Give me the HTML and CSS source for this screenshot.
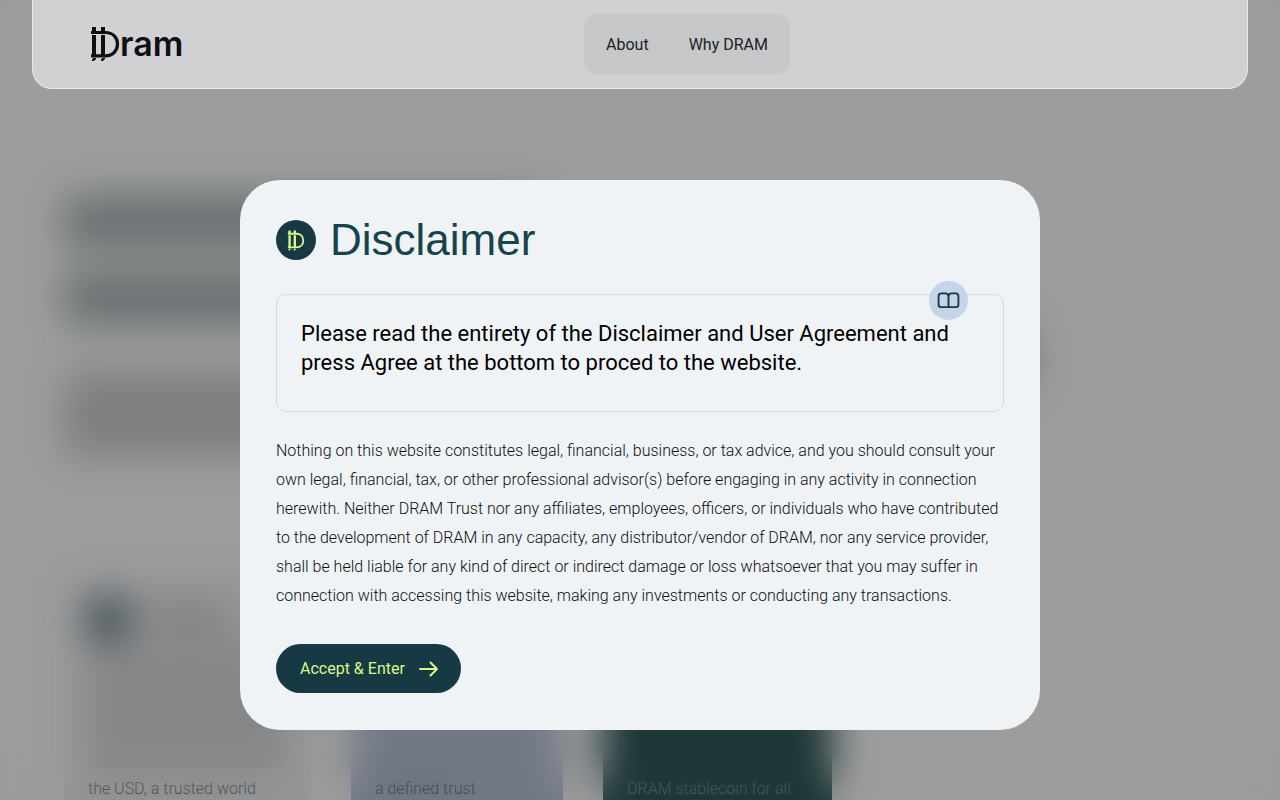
FILE: index.html
```html
<!DOCTYPE html>
<html lang="en">
<head>
  <meta charset="UTF-8" />
  <meta name="viewport" content="width=device-width, initial-scale=1.0" />
  <title>Dram</title>
  <link rel="stylesheet" href="styles.css">
</head>
<body>
  <svg class="sprite" aria-hidden="true">
    <symbol id="dram-mark" viewBox="0 0 30 36">
      <path d="M2 1h4v4H2zM11 1h4v4h-4zM3 32h3v1l-2 2H2v-1zM12 32h3v1l-2 2h-2v-1z" fill="currentColor" />
      <path d="M1 6.5h14.5C23 6.5 27.5 11.5 27.5 18S23 29.8 15.5 29.8H1" fill="none" stroke="currentColor" stroke-width="3.2" />
      <path d="M4 9v20M13 9v20" fill="none" stroke="currentColor" stroke-width="4" />
    </symbol>
  </svg>

  <header class="header">
    <a class="logo" href="#" aria-label="Dram">
      <svg><use href="#dram-mark" /></svg>
      <span>ram</span>
    </a>
    <nav class="nav">
      <a href="#about">About</a>
      <a href="#why">Why DRAM</a>
    </nav>
  </header>

  <main class="page">
    <section class="hero">
      <div class="hero-copy">
        <div class="hero-line"></div>
        <div class="hero-line"></div>
        <div class="hero-lead"></div>
      </div>
      <div class="hero-coin"></div>
    </section>
    <section class="cards">
      <article class="card">
        <div class="card-head"><i></i><b></b></div>
        <div class="card-fill"></div>
        <p>the USD, a trusted world</p>
      </article>
      <article class="card card-blue">
        <p>a defined trust</p>
      </article>
      <article class="card card-dark">
        <p>DRAM stablecoin for all</p>
      </article>
    </section>
  </main>

  <div class="tint"></div>
  <div class="blur"></div>

  <div class="overlay">
    <div class="modal" role="dialog" aria-modal="true" aria-labelledby="modal-title">
      <div class="modal-head">
        <span class="coin"><svg><use href="#dram-mark" /></svg></span>
        <h1 id="modal-title">Disclaimer</h1>
      </div>
      <div class="notice">
        <span class="badge">
          <svg viewBox="0 0 24 18" fill="none" stroke="currentColor" stroke-width="2" stroke-linejoin="round">
            <path d="M12 5C12 2.5 10.5 1.5 8.5 1.5H4.5C2.5 1.5 1.5 2.5 1.5 4.5v9c0 1.7.8 2.5 2.5 2.5h16c1.7 0 2.5-.8 2.5-2.5v-9c0-2-1-3-3-3h-4C13.5 1.5 12 2.5 12 5zM12 5V16" />
          </svg>
        </span>
        <p>Please read the entirety of the Disclaimer and User Agreement and<br>press Agree at the bottom to proced to the website.</p>
      </div>
      <p class="terms">Nothing on this website constitutes legal, financial, business, or tax advice, and you should consult your<br>
        own legal, financial, tax, or other professional advisor(s) before engaging in any activity in connection<br>
        herewith. Neither DRAM Trust nor any affiliates, employees, officers, or individuals who have contributed<br>
        to the development of DRAM in any capacity, any distributor/vendor of DRAM, nor any service provider,<br>
        shall be held liable for any kind of direct or indirect damage or loss whatsoever that you may suffer in<br>
        connection with accessing this website, making any investments or conducting any transactions.</p>
      <button class="accept" type="button">
        Accept &amp; Enter
        <svg viewBox="0 0 20 16" fill="none" stroke="currentColor" stroke-width="2" stroke-linecap="round" stroke-linejoin="round">
          <path d="M1 8h17M11.5 1.5L18 8l-6.5 6.5" />
        </svg>
      </button>
    </div>
  </div>
</body>
</html>
```

FILE: styles.css
```css
* {
  box-sizing: border-box;
}
body {
  margin: 0;
  height: 100vh;
  overflow: hidden;
  background: #fdfdfd;
  color: #0d0f12;
  font-family: Roboto, "Liberation Sans", sans-serif;
  font-size: 16px;
}
h1, p {
  margin: 0;
}
a {
  color: inherit;
  text-decoration: none;
}
.sprite {
  position: absolute;
  width: 0;
  height: 0;
}

/* header */
.header {
  position: relative;
  z-index: 20;
  display: grid;
  grid-template-columns: 1fr auto 1fr;
  align-items: center;
  height: 89px;
  margin: 0 32px;
  padding: 0 57px;
  background: #d0d1d3;
  border: 1px solid #e8e9eb;
  border-top: 0;
  border-radius: 0 0 20px 20px;
}
.logo {
  display: flex;
  align-items: center;
}
.logo svg {
  width: 30px;
  height: 36px;
}
.logo span {
  font-family: Inter, sans-serif;
  font-size: 34px;
  font-weight: 600;
  line-height: 36px;
}
.nav {
  display: flex;
  align-items: center;
  gap: 40px;
  height: 60px;
  padding: 0 22px;
  margin-left: 94px;
  background: #c6c7c9;
  border-radius: 14px;
  color: #1e2022;
}

/* page under the dialog */
.page {
  padding: 108px 64px 0;
}
.hero {
  display: flex;
  justify-content: space-between;
  height: 378px;
}
.hero-copy {
  width: 480px;
}
.hero-line {
  height: 50px;
  margin-bottom: 26px;
  background: #a3b1b2;
}
.hero-lead {
  height: 86px;
  margin-top: 48px;
  background: #cccccc;
}
.hero-coin {
  width: 100px;
  height: 100px;
  margin: 110px 180px 0 0;
  border-radius: 50%;
  background: #bcc6d6;
}
.cards {
  display: grid;
  grid-template-columns: 247px 212px 229px;
  gap: 40px;
}
.card {
  display: flex;
  flex-direction: column;
  justify-content: flex-end;
  height: 260px;
  padding: 24px 24px 32px;
  background: #eff1f4;
  color: #444a4d;
  font-weight: 300;
  line-height: 29px;
}
.card-head {
  display: flex;
  align-items: center;
  gap: 20px;
}
.card-head i {
  width: 40px;
  height: 40px;
  border-radius: 50%;
  background: #31505a;
}
.card-head b {
  width: 80px;
  height: 30px;
  background: #cccdd0;
}
.card-fill {
  flex: 1;
  margin: 6px 0;
  background: #d7d8da;
}
.card-blue {
  background: #b9c3d9;
}
.card-dark {
  background: #31575a;
  color: #9fb0b2;
}
.tint,
.blur {
  position: fixed;
  inset: 0;
}
.tint {
  background: rgba(0, 0, 0, 0.38);
}
.blur {
  backdrop-filter: blur(20px);
  mask-image: linear-gradient(#000 calc(100% - 50px), rgba(0, 0, 0, 0.5));
}

/* dialog */
.overlay {
  position: fixed;
  inset: 0;
  z-index: 10;
  display: flex;
  align-items: center;
  justify-content: center;
  padding-top: 110px;
}
.modal {
  width: 800px;
  max-width: 100%;
  padding: 36px 36px 37px;
  background: #eff3f6;
  border-radius: 40px;
}
.modal-head {
  display: flex;
  align-items: center;
  gap: 14px;
  height: 48px;
}
.modal-head h1 {
  color: #17434a;
  font-family: "Liberation Sans", sans-serif;
  font-size: 44px;
  font-weight: 400;
  line-height: 48px;
}
.coin {
  display: grid;
  place-items: center;
  width: 40px;
  height: 40px;
  border-radius: 50%;
  background: #173944;
  color: #d9f88a;
}
.coin svg {
  width: 18px;
  height: 21px;
}
.notice {
  position: relative;
  margin-top: 30px;
  padding: 24px 24px 34px;
  border: 1px solid #d5dadd;
  border-radius: 10px;
  color: #000;
  font-size: 22px;
  line-height: 29px;
  white-space: nowrap;
}
.badge {
  position: absolute;
  top: -14px;
  right: 35px;
  display: grid;
  place-items: center;
  width: 39px;
  height: 39px;
  border-radius: 50%;
  background: #c4d5e8;
  color: #173944;
}
.badge svg {
  width: 23px;
  height: 17px;
}
.terms {
  margin-top: 24px;
  font-weight: 300;
  line-height: 29px;
  white-space: nowrap;
}
.accept {
  display: flex;
  align-items: center;
  gap: 14px;
  height: 49px;
  margin-top: 34px;
  padding: 0 22px 0 24px;
  border: 0;
  border-radius: 25px;
  background: #173944;
  color: #d9f88a;
  font: inherit;
  cursor: pointer;
}
.accept svg {
  width: 20px;
  height: 16px;
}
```
